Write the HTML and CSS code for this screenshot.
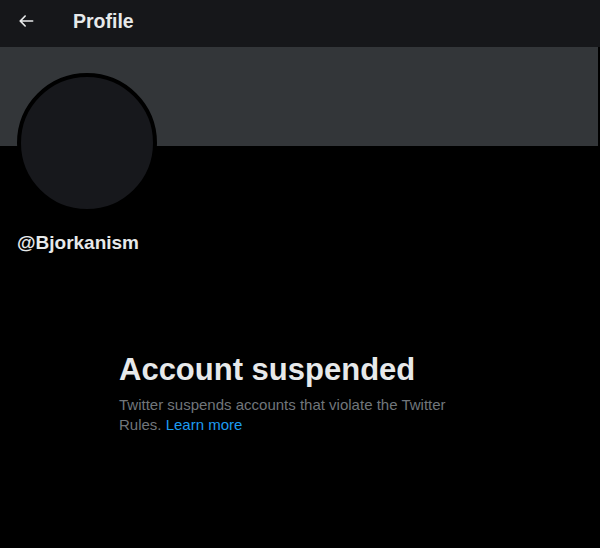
FILE: index.html
```html
<!DOCTYPE html>
<html lang="en">
<head>
  <meta charset="UTF-8">
  <meta name="viewport" content="width=device-width, initial-scale=1.0">
  <title>Profile</title>
  <link rel="stylesheet" href="styles.css">
</head>
<body>
  <header class="topbar">
    <button class="back" aria-label="Back">
      <svg viewBox="0 0 24 24" width="20" height="20">
        <path d="M20 11H7.414l4.293-4.293c.39-.39.39-1.023 0-1.414s-1.023-.39-1.414 0l-6 6c-.39.39-.39 1.023 0 1.414l6 6c.195.195.45.293.707.293s.512-.098.707-.293c.39-.39.39-1.023 0-1.414L7.414 13H20c.553 0 1-.447 1-1s-.447-1-1-1z"></path>
      </svg>
    </button>
    <h1>Profile</h1>
  </header>

  <div class="banner"></div>

  <div class="profile">
    <div class="avatar"></div>
    <div class="handle">@Bjorkanism</div>
  </div>

  <section class="suspended">
    <h2>Account suspended</h2>
    <p>Twitter suspends accounts that violate the Twitter Rules. <a href="#">Learn more</a></p>
  </section>
</body>
</html>
```

FILE: styles.css
```css
body {
  margin: 0;
  padding: 0;
  background: #000;
  color: #e7e9ea;
  font-family: "Liberation Sans", Arial, sans-serif;
  height: 548px;
  overflow: hidden;
}
.topbar {
  display: flex;
  align-items: center;
  height: 47px;
  padding-left: 16px;
  background-color: #16171a;
}
.back {
  display: flex;
  padding: 0;
  margin-bottom: 6px;
  background: none;
  border: none;
  cursor: pointer;
}
.back svg {
  fill: #e7e9ea;
}
.topbar h1 {
  margin: 0 0 5px 37px;
  font-size: 19.5px;
  font-weight: bold;
  color: #e7e9ea;
}
.banner {
  height: 99px;
  margin-right: 2px;
  background-color: #333639;
}
.profile {
  padding-left: 17px;
}
.avatar {
  width: 132px;
  height: 132px;
  margin-top: -73px;
  border: 4px solid #000;
  border-radius: 50%;
  background-color: #17181c;
}
.handle {
  margin-top: 18px;
  font-size: 19px;
  line-height: 24px;
  font-weight: bold;
}
.suspended {
  width: 340px;
  margin: 97px 0 0 119px;
}
.suspended h2 {
  margin: 0;
  font-size: 31px;
  line-height: 36px;
  font-weight: bold;
}
.suspended p {
  margin: 7px 0 0;
  font-size: 15px;
  line-height: 20px;
  color: #71767b;
}
.suspended a {
  color: #1d9bf0;
  text-decoration: none;
}
```
